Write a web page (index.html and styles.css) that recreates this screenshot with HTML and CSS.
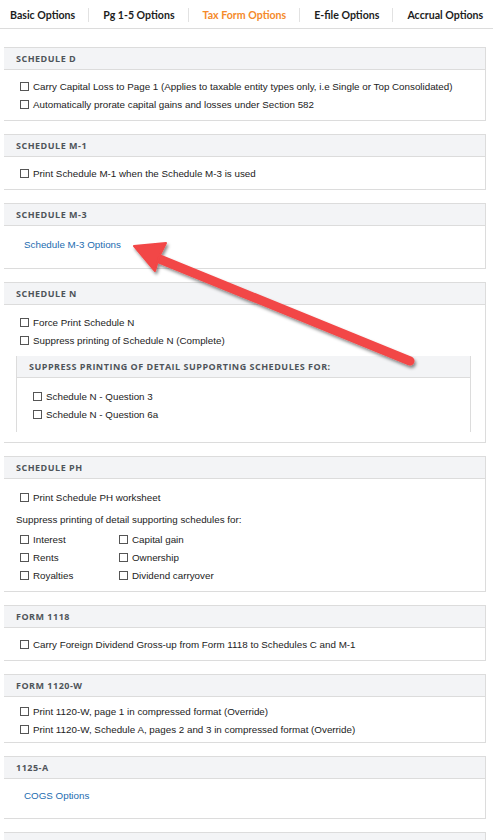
FILE: index.html
```html
<!DOCTYPE html>
<html>
<head>
<meta charset="utf-8">
<link rel="stylesheet" href="styles.css">
</head>
<body>
<nav class="tabs">
  <span class="tab tab-first">Basic Options</span>
  <span class="tab">Pg 1-5 Options</span>
  <span class="tab active">Tax Form Options</span>
  <span class="tab">E-file Options</span>
  <span class="tab">Accrual Options</span>
</nav>

<main class="content">
  <section class="card">
    <h3 class="card-head">Schedule D</h3>
    <div class="card-body">
      <label class="row"><span class="box"></span>Carry Capital Loss to Page 1 (Applies to taxable entity types only, i.e Single or Top Consolidated)</label>
      <label class="row"><span class="box"></span>Automatically prorate capital gains and losses under Section 582</label>
    </div>
  </section>

  <section class="card">
    <h3 class="card-head">Schedule M-1</h3>
    <div class="card-body">
      <label class="row"><span class="box"></span>Print Schedule M-1 when the Schedule M-3 is used</label>
    </div>
  </section>

  <section class="card">
    <h3 class="card-head">Schedule M-3</h3>
    <div class="card-body link-body">
      <a class="link">Schedule M-3 Options</a>
    </div>
  </section>

  <section class="card">
    <h3 class="card-head">Schedule N</h3>
    <div class="card-body body-n">
      <label class="row"><span class="box"></span>Force Print Schedule N</label>
      <label class="row"><span class="box"></span>Suppress printing of Schedule N (Complete)</label>
      <div class="sub">
        <h4 class="sub-head">Suppress printing of detail supporting schedules for:</h4>
        <div class="sub-body">
          <label class="row"><span class="box"></span>Schedule N - Question 3</label>
          <label class="row"><span class="box"></span>Schedule N - Question 6a</label>
        </div>
      </div>
    </div>
  </section>

  <section class="card">
    <h3 class="card-head">Schedule PH</h3>
    <div class="card-body body-ph">
      <label class="row"><span class="box"></span>Print Schedule PH worksheet</label>
      <p class="note">Suppress printing of detail supporting schedules for:</p>
      <div class="grid">
        <label class="row"><span class="box"></span>Interest</label>
        <label class="row"><span class="box"></span>Capital gain</label>
        <label class="row"><span class="box"></span>Rents</label>
        <label class="row"><span class="box"></span>Ownership</label>
        <label class="row"><span class="box"></span>Royalties</label>
        <label class="row"><span class="box"></span>Dividend carryover</label>
      </div>
    </div>
  </section>

  <section class="card">
    <h3 class="card-head">Form 1118</h3>
    <div class="card-body">
      <label class="row"><span class="box"></span>Carry Foreign Dividend Gross-up from Form 1118 to Schedules C and M-1</label>
    </div>
  </section>

  <section class="card">
    <h3 class="card-head">Form 1120-W</h3>
    <div class="card-body tight">
      <label class="row"><span class="box"></span>Print 1120-W, page 1 in compressed format (Override)</label>
      <label class="row"><span class="box"></span>Print 1120-W, Schedule A, pages 2 and 3 in compressed format (Override)</label>
    </div>
  </section>

  <section class="card">
    <h3 class="card-head">1125-A</h3>
    <div class="card-body link-body link-short">
      <a class="link">COGS Options</a>
    </div>
  </section>

  <section class="card">
    <h3 class="card-head">1125-E</h3>
    <div class="card-body">
      <label class="row"><span class="box"></span>Print Form 1125-E</label>
    </div>
  </section>
</main>

<svg class="arrow" width="493" height="840" viewBox="0 0 493 840" aria-hidden="true">
  <defs>
    <filter id="sh" x="-10%" y="-10%" width="130%" height="140%">
      <feDropShadow dx="1.5" dy="2.5" stdDeviation="1.6" flood-color="#000" flood-opacity="0.45"/>
    </filter>
  </defs>
  <g filter="url(#sh)" fill="#f24646" stroke="#f24646">
    <line x1="157" y1="258" x2="410" y2="361" stroke-width="9" stroke-linecap="round"/>
    <path d="M134 246 L166 243 L159 257 L155 271 Z" stroke-width="2" stroke-linejoin="round"/>
  </g>
</svg>
</body>
</html>
```

FILE: styles.css
```css
* { box-sizing: border-box; }

html, body {
  margin: 0;
  padding: 0;
  background: #fff;
}

body {
  position: relative;
  width: 493px;
  height: 840px;
  overflow: hidden;
  font-family: "Liberation Sans", Arial, sans-serif;
  font-size: 9.8px;
  color: #222;
}

.tabs {
  display: flex;
  align-items: center;
  height: 29px;
  border-bottom: 1px solid #dcdcdc;
  font-family: Lato, "Open Sans", sans-serif;
  font-weight: 700;
  font-size: 10.6px;
  color: #1d1d1d;
  white-space: nowrap;
}

.tab {
  position: relative;
  padding: 1px 13px 0 15px;
  line-height: 28px;
}

.tab + .tab::before {
  content: "";
  position: absolute;
  left: 0;
  top: 8px;
  height: 14px;
  border-left: 1px solid #e2e2e2;
}

.tab-first { padding-left: 10px; }

.tab.active { color: #f58a2a; }

.content {
  padding: 18px 7px 0 4px;
}

.card {
  border: 1px solid #dcdcdc;
  border-left: none;
  margin-bottom: 13px;
}

.card-head {
  margin: 0;
  height: 22px;
  line-height: 21px;
  padding-left: 12px;
  background: #f3f4f6;
  border-bottom: 1px solid #dcdcdc;
  font-family: "Open Sans", sans-serif;
  font-weight: 700;
  font-size: 9px;
  letter-spacing: 0.5px;
  text-transform: uppercase;
  color: #4f545a;
}

.card-body {
  padding: 7px 0 7px 16px;
}

.card-body.tight {
  padding: 5px 0 4px 16px;
}

.row {
  display: flex;
  align-items: center;
  height: 18px;
  white-space: nowrap;
}

.box {
  flex: none;
  width: 9px;
  height: 9px;
  border: 1px solid #555;
  background: #fff;
  margin-right: 4px;
}

.card-body.link-body {
  padding: 10px 0 14px 20px;
  line-height: 18px;
}

.card-body.link-short {
  padding: 8px 0 13px 20px;
}

.link {
  color: #1c6cb0;
  text-decoration: none;
}

.body-n {
  padding: 8px 14px 10px 16px;
}

.sub {
  margin: 7px 0 0 -4px;
  border-left: 1px solid #dcdcdc;
  border-right: 1px solid #dcdcdc;
}

.sub-head {
  margin: 0;
  height: 22px;
  line-height: 21px;
  padding-left: 12px;
  background: #f3f4f6;
  border-bottom: 1px solid #dcdcdc;
  font-family: "Open Sans", sans-serif;
  font-weight: 700;
  font-size: 9px;
  letter-spacing: 0.5px;
  text-transform: uppercase;
  color: #4f545a;
}

.sub-body {
  padding: 9px 0 9px 16px;
}

.card-body.body-ph {
  padding: 9px 0 7px 16px;
}

.note {
  margin: 5px 0 1px -4px;
  line-height: 18px;
}

.grid {
  display: grid;
  grid-template-columns: 99px 1fr;
}

.arrow {
  position: absolute;
  left: 0;
  top: 0;
  pointer-events: none;
}
```
